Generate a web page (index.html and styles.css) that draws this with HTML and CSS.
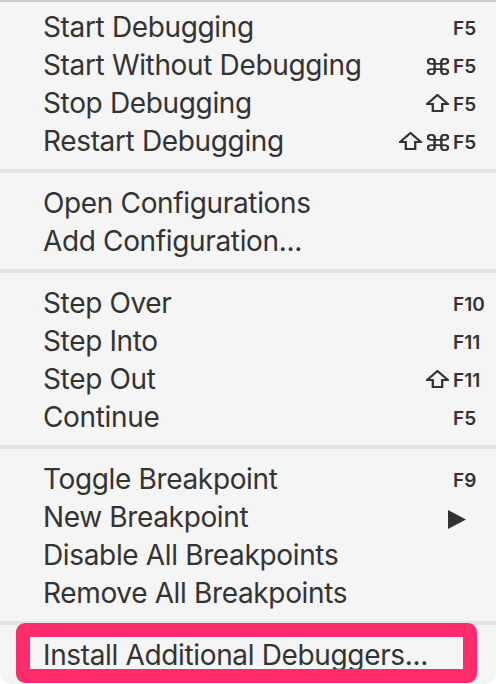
FILE: index.html
```html
<!DOCTYPE html>
<html>
<head>
<meta charset="utf-8">
<link rel="stylesheet" href="styles.css">
</head>
<body>
<div class="menu">
  <div class="group">
    <div class="item"><span class="label">Start Debugging</span><span class="sc"><span class="mods"></span><span class="key">F5</span></span></div>
    <div class="item"><span class="label">Start Without Debugging</span><span class="sc"><span class="mods"><svg class="cmd" viewBox="2.2 2.2 19.6 19.6" preserveAspectRatio="none"><path d="M15 6v12a3 3 0 1 0 3-3H6a3 3 0 1 0 3 3V6a3 3 0 1 0-3 3h12a3 3 0 1 0-3-3z"/></svg></span><span class="key">F5</span></span></div>
    <div class="item"><span class="label">Stop Debugging</span><span class="sc"><span class="mods"><svg class="shift" viewBox="1 0.5 22 19" preserveAspectRatio="none"><path d="M12 1.5L22 11h-5.5v7.5h-9V11H2z"/></svg></span><span class="key">F5</span></span></div>
    <div class="item"><span class="label">Restart Debugging</span><span class="sc"><span class="mods"><svg class="shift" viewBox="1 0.5 22 19" preserveAspectRatio="none"><path d="M12 1.5L22 11h-5.5v7.5h-9V11H2z"/></svg><svg class="cmd" viewBox="2.2 2.2 19.6 19.6" preserveAspectRatio="none"><path d="M15 6v12a3 3 0 1 0 3-3H6a3 3 0 1 0 3 3V6a3 3 0 1 0-3 3h12a3 3 0 1 0-3-3z"/></svg></span><span class="key">F5</span></span></div>
  </div>
  <div class="sep"></div>
  <div class="group">
    <div class="item"><span class="label">Open Configurations</span></div>
    <div class="item"><span class="label">Add Configuration...</span></div>
  </div>
  <div class="sep"></div>
  <div class="group">
    <div class="item"><span class="label">Step Over</span><span class="sc"><span class="mods"></span><span class="key">F10</span></span></div>
    <div class="item"><span class="label">Step Into</span><span class="sc"><span class="mods"></span><span class="key">F11</span></span></div>
    <div class="item"><span class="label">Step Out</span><span class="sc"><span class="mods"><svg class="shift" viewBox="1 0.5 22 19" preserveAspectRatio="none"><path d="M12 1.5L22 11h-5.5v7.5h-9V11H2z"/></svg></span><span class="key">F11</span></span></div>
    <div class="item"><span class="label">Continue</span><span class="sc"><span class="mods"></span><span class="key">F5</span></span></div>
  </div>
  <div class="sep"></div>
  <div class="group">
    <div class="item"><span class="label">Toggle Breakpoint</span><span class="sc"><span class="mods"></span><span class="key">F9</span></span></div>
    <div class="item"><span class="label">New Breakpoint</span><span class="sc"><span class="mods"></span><span class="key"><svg class="arrow" viewBox="0 0 18 19"><path d="M0 0L18 9.5L0 19z"/></svg></span></span></div>
    <div class="item"><span class="label">Disable All Breakpoints</span></div>
    <div class="item"><span class="label">Remove All Breakpoints</span></div>
  </div>
  <div class="sep"></div>
  <div class="group">
    <div class="item highlighted"><span class="label">Install Additional Debuggers...</span><span class="callout"></span></div>
  </div>
</div>
</body>
</html>
```

FILE: styles.css
```css
html, body {
  margin: 0;
  padding: 0;
  background: #ffffff;
}

.menu {
  width: 496px;
  height: 684px;
  box-sizing: border-box;
  background: #f5f5f5;
  border-top: 2px solid #cdcdcd;
  border-radius: 0 0 10px 10px;
  padding-top: 5px;
  font-family: Inter, "Liberation Sans", sans-serif;
  color: #333333;
}

.group {
  display: flex;
  flex-direction: column;
}

.item {
  position: relative;
  height: 38px;
  display: flex;
  align-items: center;
  justify-content: space-between;
  padding-left: 43px;
  padding-right: 10px;
  font-size: 28px;
  letter-spacing: -0.35px;
  line-height: 38px;
  white-space: nowrap;
}

.label {
  padding-top: 2px;
}

.sep {
  height: 4px;
  background: #e3e3e3;
  margin: 10px 0;
}

.sc {
  display: flex;
  align-items: center;
  padding-top: 6px;
}

.mods {
  display: flex;
  align-items: center;
  justify-content: flex-end;
  gap: 5px;
}

.key {
  width: 33px;
  margin-left: 4px;
  font-size: 19px;
  font-weight: 600;
  letter-spacing: 0;
  display: flex;
  align-items: center;
}

.cmd {
  width: 22px;
  height: 17px;
  fill: none;
  stroke: #333333;
  stroke-width: 2.2;
  margin-top: -2px;
}

.shift {
  width: 23px;
  height: 18px;
  fill: none;
  stroke: #333333;
  stroke-width: 2.2;
  stroke-linejoin: miter;
  margin-top: -5px;
}

.arrow {
  width: 18px;
  height: 19px;
  fill: #333333;
  margin-left: -5px;
}

.callout {
  position: absolute;
  left: 16px;
  right: 19px;
  top: -12px;
  bottom: -10px;
  border: 14px solid #fe2c6b;
  border-radius: 9px;
}
```
